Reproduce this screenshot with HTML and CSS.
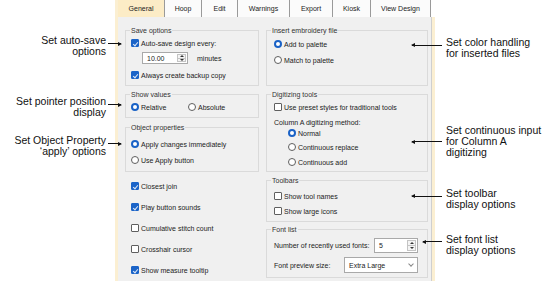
FILE: index.html
```html
<!DOCTYPE html>
<html lang="en">
<head>
    <meta charset="UTF-8">
    <meta name="viewport" content="width=device-width, initial-scale=1.0">
    <title>General Options</title>
    <link rel="stylesheet" href="styles.css">
</head>
<body>
    <div class="figure">
        <div class="dialog">
            <div class="tabs">
                <div class="tab active">General</div>
                <div class="tab">Hoop</div>
                <div class="tab">Edit</div>
                <div class="tab">Warnings</div>
                <div class="tab">Export</div>
                <div class="tab">Kiosk</div>
                <div class="tab">View Design</div>
            </div>

            <div class="panel">
                <div class="col col-left">
                    <fieldset class="group save">
                        <legend>Save options</legend>
                        <div class="row"><span class="check on"></span>Auto-save design every:</div>
                        <div class="row spin-row">
                            <span class="spin spin-save">
                                <span class="spin-value">10.00</span>
                                <span class="spin-btns"><i class="up"></i><i class="down"></i></span>
                            </span>
                            <span class="unit">minutes</span>
                        </div>
                        <div class="row backup"><span class="check on"></span>Always create backup copy</div>
                    </fieldset>

                    <fieldset class="group values">
                        <legend>Show values</legend>
                        <div class="row">
                            <span class="choice"><span class="radio on"></span>Relative</span>
                            <span class="choice"><span class="radio"></span>Absolute</span>
                        </div>
                    </fieldset>

                    <fieldset class="group props">
                        <legend>Object properties</legend>
                        <div class="row"><span class="radio on"></span>Apply changes immediately</div>
                        <div class="row"><span class="radio"></span>Use Apply button</div>
                    </fieldset>

                    <div class="loose">
                        <div class="row"><span class="check on"></span>Closest join</div>
                        <div class="row"><span class="check on"></span>Play button sounds</div>
                        <div class="row"><span class="check"></span>Cumulative stitch count</div>
                        <div class="row"><span class="check"></span>Crosshair cursor</div>
                        <div class="row"><span class="check on"></span>Show measure tooltip</div>
                    </div>
                </div>

                <div class="col col-right">
                    <fieldset class="group insert">
                        <legend>Insert embroidery file</legend>
                        <div class="row"><span class="radio on"></span>Add to palette</div>
                        <div class="row"><span class="radio"></span>Match to palette</div>
                    </fieldset>

                    <fieldset class="group digitizing">
                        <legend>Digitizing tools</legend>
                        <div class="row"><span class="check"></span>Use preset styles for traditional tools</div>
                        <div class="row method">Column A digitizing method:</div>
                        <div class="row indent normal"><span class="radio on"></span>Normal</div>
                        <div class="row indent"><span class="radio"></span>Continuous replace</div>
                        <div class="row indent"><span class="radio"></span>Continuous add</div>
                    </fieldset>

                    <fieldset class="group toolbars">
                        <legend>Toolbars</legend>
                        <div class="row"><span class="check"></span>Show tool names</div>
                        <div class="row"><span class="check"></span>Show large icons</div>
                    </fieldset>

                    <fieldset class="group fonts">
                        <legend>Font list</legend>
                        <div class="row font-row">
                            <span>Number of recently used fonts:</span>
                            <span class="spin spin-fonts">
                                <span class="spin-value">5</span>
                                <span class="spin-btns"><i class="up"></i><i class="down"></i></span>
                            </span>
                        </div>
                        <div class="row font-row">
                            <span>Font preview size:</span>
                            <span class="select">Extra Large<i class="chevron"></i></span>
                        </div>
                    </fieldset>
                </div>
            </div>
        </div>

        <!-- callouts -->
        <div class="note note-left note-save">Set auto-save<br>options<span class="pointer"></span></div>
        <div class="note note-left note-pointer">Set pointer position<br>display<span class="pointer"></span></div>
        <div class="note note-left note-props">Set Object Property<br>‘apply’ options<span class="pointer"></span></div>

        <div class="note note-right note-color">Set color handling<br>for inserted files<span class="pointer"></span></div>
        <div class="note note-right note-column">Set continuous input<br>for Column A<br>digitizing<span class="pointer"></span></div>
        <div class="note note-right note-toolbar">Set toolbar<br>display options<span class="pointer"></span></div>
        <div class="note note-right note-fonts">Set font list<br>display options<span class="pointer"></span></div>
    </div>
</body>
</html>
```

FILE: styles.css
```css
/* Base */
* {
    box-sizing: border-box;
}

body {
    margin: 0;
    background: #fff;
    font-family: "Liberation Sans", Arial, sans-serif;
}

.figure {
    position: relative;
    width: 550px;
    height: 281px;
    overflow: hidden;
}

/* Dialog */
.dialog {
    margin-left: 115px;
    width: 320px;
    border-left: 3px solid #fbefd2;
    font-size: 7px;
    color: #222;
}

.tabs {
    display: grid;
    grid-template-columns: 47px 37px 36px 52px 43px 38px 60px;
    width: 313px;
    height: 17px;
    background: #fbfbfb;
}

.tab {
    line-height: 17px;
    text-align: center;
    border-right: 1px solid #9a9a9a;
}

.tab.active {
    background: #fcecc6;
}

.panel {
    display: grid;
    grid-template-columns: 134px 162px;
    column-gap: 7px;
    width: 317px;
    height: 270px;
    padding: 8.5px 0 0 7px;
    background: #f0f0f0;
    border-right: 3px solid #fbefd2;
    box-shadow: inset -1px 0 #cfcfcf;
}

.col {
    display: flex;
    flex-direction: column;
}

/* Group boxes */
.group {
    margin: 0;
    padding: 0 0 0 4px;
    border: 1px solid #dadada;
    min-width: 0;
}

.group legend {
    padding: 0 1px;
    line-height: 9px;
    color: #333;
}

.row {
    display: flex;
    align-items: center;
    gap: 2px;
    height: 10px;
    margin-left: 1px;
    white-space: nowrap;
}

.col-right .row {
    margin-left: 3px;
}

.save { height: 60px; padding-top: 3.5px; }
.save .spin-row { height: 12px; margin-top: 4px; }
.save .backup { margin-top: 6px; }

.values { height: 28px; margin-top: 4px; padding-top: 3.5px; }
.values .choice { display: flex; align-items: center; gap: 2px; }
.values .choice:first-child { width: 55px; }

.props { height: 49px; margin-top: 5px; padding-top: 7.5px; }
.props .row + .row { margin-top: 6px; }

.loose {
    margin-top: 4px;
    padding-left: 5px;
}

.loose .row {
    height: 21px;
}

.insert { height: 60px; padding-top: 4.5px; }
.insert .row + .row { margin-top: 6px; }

.digitizing { height: 82px; margin-top: 4px; padding-top: 3.5px; }
.digitizing .method { margin-top: 5px; }
.digitizing .indent { margin-left: 17px; margin-top: 4px; }
.digitizing .normal { margin-top: 1px; }
.digitizing .indent:last-child { margin-top: 5px; }

.toolbars { height: 46px; margin-top: 4px; padding-top: 6.5px; }
.toolbars .row + .row { margin-top: 5px; }

.fonts { height: 53px; margin-top: 3px; padding-top: 4.5px; }

.font-row {
    justify-content: space-between;
    height: 15px;
    margin-right: 9px;
}

.font-row + .font-row {
    height: 16px;
    margin-top: 4px;
}

/* Controls */
.check,
.radio {
    flex: none;
    width: 8px;
    height: 8px;
    background: #fff;
    border: 1px solid #5f5f5f;
}

.check {
    position: relative;
    border-radius: 1px;
}

.check.on {
    background: #1b64c8;
    border-color: #1b64c8;
}

.check.on::after {
    content: "";
    position: absolute;
    left: 2px;
    top: 1px;
    width: 2px;
    height: 4px;
    border: solid #dfe9f8;
    border-width: 0 1px 1px 0;
    transform: rotate(40deg);
}

.radio {
    border-radius: 50%;
}

.radio.on {
    border: 2.5px solid #1a62c6;
}

.spin {
    display: flex;
    background: #fff;
    border: 1px solid #a9a9a9;
}

.spin-save {
    width: 46px;
    height: 12px;
    margin-left: 11px;
}

.spin-fonts {
    width: 44px;
    height: 15px;
}

.spin-value {
    flex: 1;
    padding-left: 4px;
    align-self: center;
}

.spin-btns {
    display: flex;
    flex-direction: column;
    width: 9px;
    margin: 1px;
    border: 1px solid #c4c4c4;
    background: #f4f4f4;
}

.spin-btns i {
    flex: 1;
    display: flex;
    align-items: center;
    justify-content: center;
}

.spin-btns i + i {
    border-top: 1px solid #c4c4c4;
}

.spin-btns .up::before {
    content: "";
    border-left: 2px solid transparent;
    border-right: 2px solid transparent;
    border-bottom: 2px solid #333;
}

.spin-btns .down::before {
    content: "";
    border-left: 2px solid transparent;
    border-right: 2px solid transparent;
    border-top: 2px solid #333;
}

.unit {
    margin-left: 7px;
}

.select {
    display: flex;
    align-items: center;
    justify-content: space-between;
    width: 74px;
    height: 16px;
    padding: 0 4px 0 4px;
    background: #fff;
    border: 1px solid #a9a9a9;
}

.chevron {
    width: 4px;
    height: 4px;
    margin-top: -2px;
    border: solid #888;
    border-width: 0 1px 1px 0;
    transform: rotate(45deg);
}

/* Callouts */
.note {
    position: absolute;
    font-size: 10.5px;
    line-height: 11px;
    color: #111;
}

.note-left {
    right: 444px;
    text-align: right;
}

.note-right {
    left: 446px;
}

.pointer {
    position: absolute;
    height: 1px;
    background: #111;
}

.pointer::after {
    content: "";
    position: absolute;
    top: -1.5px;
    border-top: 2px solid transparent;
    border-bottom: 2px solid transparent;
}

.note-left .pointer {
    left: calc(100% + 2px);
    top: 8.5px;
    width: 13px;
}

.note-left .pointer::after {
    right: -1px;
    border-left: 4px solid #111;
}

.note-right .pointer {
    right: calc(100% + 4px);
    top: 7.5px;
    width: 30px;
}

.note-right .pointer::after {
    left: -1px;
    border-right: 4px solid #111;
}

.note-save { top: 34.5px; }
.note-pointer { top: 95.5px; }
.note-props { top: 134.5px; }

.note-color { top: 37px; }
.note-column { top: 124.5px; }
.note-column .pointer { top: 16.5px; }
.note-toolbar { top: 187.5px; }
.note-toolbar .pointer { top: 8px; }
.note-fonts { top: 233.5px; }
.note-fonts .pointer { width: 19px; }
```
